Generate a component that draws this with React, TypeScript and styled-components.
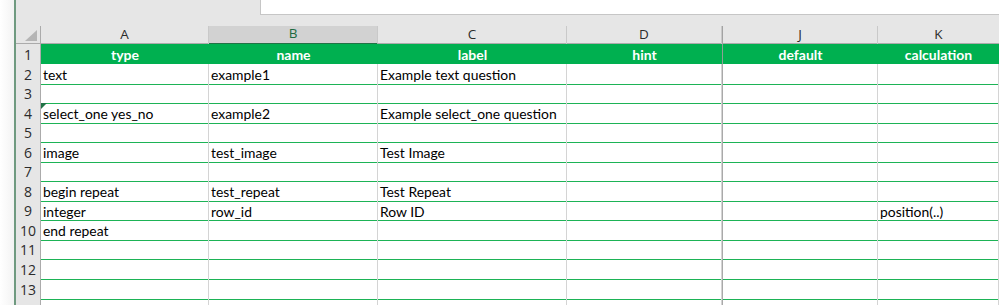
import React from 'react';
import styled, {createGlobalStyle} from 'styled-components';

const COLS = '25px 168px 169px 189px 155px 156px 1fr';

const GlobalStyle = createGlobalStyle`
  html, body {
    margin: 0;
    padding: 0;
    background: #ffffff;
    overflow: hidden;
  }
`

interface SheetRow {
    n: number;
    cells?: string[];
    header?: boolean;
    comment?: boolean;
    hidden?: boolean;
}

const letters = ['A', 'B', 'C', 'D', 'J', 'K'];

const rows: SheetRow[] = [
    {n: 1, header: true, cells: ['type', 'name', 'label', 'hint', 'default', 'calculation']},
    {n: 2, cells: ['text', 'example1', 'Example text question']},
    {n: 3},
    {n: 4, comment: true, cells: ['select_one yes_no', 'example2', 'Example select_one question']},
    {n: 5},
    {n: 6, cells: ['image', 'test_image', 'Test Image']},
    {n: 7},
    {n: 8, cells: ['begin repeat', 'test_repeat', 'Test Repeat']},
    {n: 9, cells: ['integer', 'row_id', 'Row ID', '', '', 'position(..)']},
    {n: 10, cells: ['end repeat']},
    {n: 11},
    {n: 12},
    {n: 13},
    {n: 14, hidden: true},
];

export default function App() {
    return (
        <Window>
            <GlobalStyle/>
            <SideStrip/>
            <Main>
                <TopBar>
                    <FormulaBox/>
                </TopBar>
                <ColumnHeaderRow>
                    <Corner>
                        <svg width="12" height="11" viewBox="0 0 12 11">
                            <polygon points="12,0 12,11 0,11" fill="#b5b5b5"/>
                        </svg>
                    </Corner>
                    {letters.map((l, i) => (
                        <ColumnLetter key={l} selected={l === 'B'} gap={l === 'J'} last={i === letters.length - 1}>
                            {l}
                        </ColumnLetter>
                    ))}
                </ColumnHeaderRow>
                {rows.map(row => (
                    <Row key={row.n}>
                        <RowNumber>{row.hidden ? '' : row.n}</RowNumber>
                        {letters.map((l, i) => {
                            const value = row.cells?.[i] ?? '';
                            return row.header ? (
                                <HeaderCell key={l} gap={l === 'J'}>{value}</HeaderCell>
                            ) : (
                                <Cell key={l} gap={l === 'J'}>
                                    {row.comment && i === 0 && <CommentMark/>}
                                    {value}
                                </Cell>
                            );
                        })}
                    </Row>
                ))}
            </Main>
        </Window>
    );
}

const Window = styled.div`
  display: flex;
  flex-direction: row;
  width: 999px;
  height: 305px;
  overflow: hidden;
  background: #e6e6e6;
`

const SideStrip = styled.div`
  width: 14px;
  flex-shrink: 0;
  background: linear-gradient(to right, #ffffff, #f3f3f3);
  border-right: 2px solid #6f9a80;
`

const Main = styled.div`
  flex: 1;
  display: flex;
  flex-direction: column;
  min-width: 0;
`

const TopBar = styled.div`
  height: 26px;
  flex-shrink: 0;
  background: #e6e6e6;
  padding-left: 244px;
  box-sizing: border-box;
`

const FormulaBox = styled.div`
  height: 15px;
  background: #ffffff;
  border-left: 1px solid #c6c6c6;
  border-bottom: 1px solid #c6c6c6;
  box-sizing: border-box;
`

const ColumnHeaderRow = styled.div`
  display: grid;
  grid-template-columns: ${COLS};
  height: 18px;
  flex-shrink: 0;
  background: #e6e6e6;
  border-bottom: 1px solid #ababab;
  box-sizing: border-box;
`

const Corner = styled.div`
  display: flex;
  align-items: flex-end;
  justify-content: flex-end;
  padding: 0 3px 3px 0;
  border-right: 1px solid #ababab;
`

const ColumnLetter = styled.div<{selected?: boolean; gap?: boolean; last?: boolean}>`
  display: flex;
  align-items: center;
  justify-content: center;
  padding-bottom: 2px;
  font-family: "Open Sans", "Noto Sans", sans-serif;
  font-size: 13.5px;
  line-height: 15px;
  color: ${p => p.selected ? '#1e6b41' : '#2b2b2b'};
  background: ${p => p.selected ? '#d2d2d2' : 'transparent'};
  border-bottom: ${p => p.selected ? '2px solid #217346' : '0'};
  border-left: ${p => p.gap ? '1px solid #a3a3a3' : '0'};
  border-right: ${p => p.last ? '0' : '1px solid #c9c9c9'};
  margin-bottom: ${p => p.selected ? '-1px' : '0'};
  box-sizing: border-box;
`

const Row = styled.div`
  display: grid;
  grid-template-columns: ${COLS};
  height: 19.55px;
  flex-shrink: 0;
  background: #ffffff;
`

const RowNumber = styled.div`
  display: flex;
  align-items: center;
  justify-content: center;
  padding-top: 1px;
  background: #e6e6e6;
  font-family: "Open Sans", "Noto Sans", sans-serif;
  font-size: 14px;
  color: #2b2b2b;
  border-right: 1px solid #ababab;
  border-bottom: 1px solid #cfcfcf;
  box-sizing: border-box;
`

const HeaderCell = styled.div<{gap?: boolean}>`
  display: flex;
  align-items: center;
  justify-content: center;
  padding-top: 1px;
  background: #00b050;
  color: #ffffff;
  font-family: Lato, "Liberation Sans", sans-serif;
  font-weight: 700;
  font-size: 14px;
  border-left: ${p => p.gap ? '1px solid #8f9f94' : '0'};
  border-bottom: 1px solid #38c06f;
  box-sizing: border-box;
  white-space: nowrap;
`

const Cell = styled.div<{gap?: boolean}>`
  position: relative;
  display: flex;
  align-items: center;
  padding: 2px 2px 0;
  font-family: Lato, "Liberation Sans", sans-serif;
  font-size: 13.9px;
  color: #000000;
  border-right: 1px solid #d4d4d4;
  border-left: ${p => p.gap ? '1px solid #a9a9a9' : '0'};
  border-bottom: 1px solid #1db356;
  box-sizing: border-box;
  white-space: nowrap;
  overflow: visible;
`

const CommentMark = styled.span`
  position: absolute;
  top: 0;
  left: 0;
  width: 0;
  height: 0;
  border-top: 6px solid #217346;
  border-right: 6px solid transparent;
`
